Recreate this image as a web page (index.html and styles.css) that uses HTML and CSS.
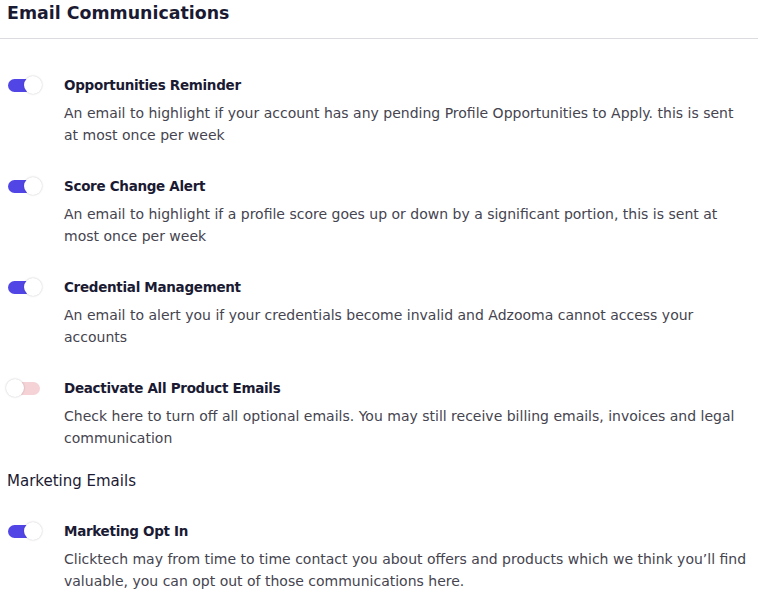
FILE: index.html
```html
<!DOCTYPE html>
<html lang="en">
<head>
    <meta charset="UTF-8">
    <meta name="viewport" content="width=device-width, initial-scale=1.0">
    <title>Email Communications</title>
    <link rel="stylesheet" href="styles.css">
</head>
<body>
    <h2 class="page-title">Email Communications</h2>
    <hr class="divider">

    <div class="pref-list">
        <div class="pref">
            <label class="switch"><input type="checkbox" checked><span class="slider"></span></label>
            <div class="pref-body">
                <div class="pref-title">Opportunities Reminder</div>
                <p class="pref-desc">An email to highlight if your account has any pending Profile Opportunities to Apply. this is sent at most once per week</p>
            </div>
        </div>
        <div class="pref">
            <label class="switch"><input type="checkbox" checked><span class="slider"></span></label>
            <div class="pref-body">
                <div class="pref-title">Score Change Alert</div>
                <p class="pref-desc">An email to highlight if a profile score goes up or down by a significant portion, this is sent at most once per week</p>
            </div>
        </div>
        <div class="pref">
            <label class="switch"><input type="checkbox" checked><span class="slider"></span></label>
            <div class="pref-body">
                <div class="pref-title">Credential Management</div>
                <p class="pref-desc">An email to alert you if your credentials become invalid and Adzooma cannot access your accounts</p>
            </div>
        </div>
        <div class="pref">
            <label class="switch off"><input type="checkbox"><span class="slider"></span></label>
            <div class="pref-body">
                <div class="pref-title">Deactivate All Product Emails</div>
                <p class="pref-desc">Check here to turn off all optional emails. You may still receive billing emails, invoices and legal communication</p>
            </div>
        </div>
    </div>

    <h3 class="section-title">Marketing Emails</h3>

    <div class="pref-list">
        <div class="pref">
            <label class="switch"><input type="checkbox" checked><span class="slider"></span></label>
            <div class="pref-body">
                <div class="pref-title">Marketing Opt In</div>
                <p class="pref-desc">Clicktech may from time to time contact you about offers and products which we think you’ll find valuable, you can opt out of those communications here.</p>
            </div>
        </div>
    </div>
</body>
</html>
```

FILE: styles.css
```css
body {
    font-family: "DejaVu Sans", "Liberation Sans", sans-serif;
    margin: 0;
    color: #1b1a33;
    background: #fff;
}
.page-title {
    font-size: 17.4px;
    font-weight: 700;
    margin: 0;
    padding: 0 7px;
    line-height: 26px;
    height: 38px;
}
.divider {
    border: none;
    border-top: 1px solid #dcdbe0;
    margin: 0;
}
.pref-list {
    padding: 35px 0 0 7px;
}
.pref {
    display: flex;
    align-items: flex-start;
    margin-bottom: 29px;
}
.switch {
    position: relative;
    width: 35px;
    height: 22px;
    margin-right: 22px;
    flex-shrink: 0;
}
.switch input {
    display: none;
}
.slider {
    position: absolute;
    left: 1px;
    top: 5px;
    width: 32px;
    height: 13px;
    border-radius: 7px;
    background: #5146e5;
}
.slider::after {
    content: "";
    position: absolute;
    right: -2px;
    top: -3px;
    width: 18px;
    height: 18px;
    border-radius: 50%;
    background: #fff;
    box-shadow: 0 0 2px rgba(0, 0, 0, 0.25);
}
.switch.off .slider {
    background: #f5d2d5;
}
.switch.off .slider::after {
    right: auto;
    left: -2px;
}
.pref-body {
    flex: 1;
    max-width: 685px;
}
.pref-title {
    font-size: 13.5px;
    font-weight: 700;
    letter-spacing: -0.3px;
    line-height: 22px;
    margin-bottom: 6px;
}
.pref-desc {
    margin: 0;
    font-size: 14px;
    line-height: 22px;
    color: #45444f;
}
.section-title {
    font-size: 15px;
    font-weight: 400;
    margin: -8px 0 0;
    padding-left: 7px;
    line-height: 22px;
}
.section-title + .pref-list {
    padding-top: 28px;
}
```
